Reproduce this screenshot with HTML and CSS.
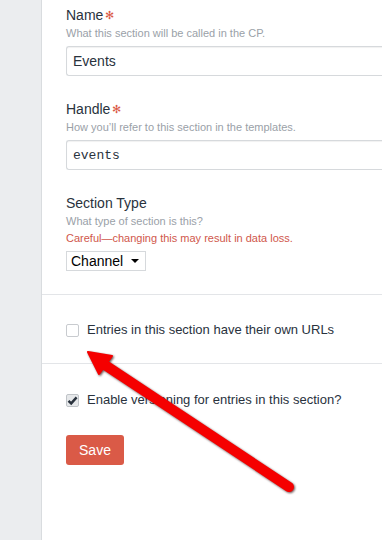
FILE: index.html
```html
<!DOCTYPE html>
<html>
<head>
  <title>Edit Section</title>
  <link rel="stylesheet" href="styles.css">
</head>
<body>
  <div class="page">
    <div class="sidebar"></div>

    <div class="main">
      <div class="block">
        <div class="field">
          <div class="label">Name<span class="req">&#x273B;</span></div>
          <div class="instr">What this section will be called in the CP.</div>
          <input class="text" type="text" value="Events">
        </div>

        <div class="field">
          <div class="label">Handle<span class="req">&#x273B;</span></div>
          <div class="instr">How you’ll refer to this section in the templates.</div>
          <input class="text code" type="text" value="events">
        </div>

        <div class="field">
          <div class="label">Section Type</div>
          <div class="instr">What type of section is this?</div>
          <div class="instr warning">Careful—changing this may result in data loss.</div>
          <div class="select">
            <select>
              <option>Channel</option>
              <option>Single</option>
              <option>Structure</option>
            </select>
            <span class="caret"></span>
          </div>
        </div>
      </div>

      <div class="block check-block">
        <label class="check">
          <span class="box"></span>
          Entries in this section have their own URLs
        </label>
      </div>

      <div class="block check-block last">
        <label class="check">
          <span class="box checked">
            <svg width="11" height="11" viewBox="0 0 11 11"><path d="M1.5 5.8 L4.2 8.4 L9.6 2.4" fill="none" stroke="#29323d" stroke-width="2.4"/></svg>
          </span>
          Enable versioning for entries in this section?
        </label>
        <button class="btn">Save</button>
      </div>
    </div>
  </div>

  <!-- annotation arrow drawn over the screenshot -->
  <svg class="arrow" width="382" height="540" viewBox="0 0 382 540">
    <line x1="102" y1="363" x2="289" y2="487" stroke="#f50000" stroke-width="10" stroke-linecap="round"/>
    <polygon points="88,352 112,356 99,374" fill="#f50000" stroke="#f50000" stroke-width="2" stroke-linejoin="round"/>
  </svg>
</body>
</html>
```

FILE: styles.css
```css
body {
  margin: 0;
  padding: 0;
  background-color: #fff;
  font-family: "Liberation Sans", Arial, sans-serif;
  color: #29323d;
}

.page {
  display: flex;
  min-height: 540px;
  overflow: hidden;
}

.sidebar {
  width: 41px;
  flex-shrink: 0;
  background-color: #ebedef;
  border-right: 1px solid #d9dcdf;
}

.main {
  flex: 1;
  min-width: 0;
}

.block {
  padding: 5px 0 0 24px;
}

.field {
  margin-bottom: 23px;
}

.label {
  font-size: 14px;
  line-height: 20px;
  color: #29323d;
}

.req {
  color: #da5a47;
  font-size: 11px;
  margin-left: 2px;
  vertical-align: 1px;
}

.instr {
  font-size: 11px;
  line-height: 17px;
  color: #9aa1a8;
}

.warning {
  color: #d0574b;
}

.text {
  display: block;
  box-sizing: border-box;
  width: 340px;
  height: 30px;
  margin-top: 4px;
  padding: 0 6px;
  border: 1px solid #d6d9dc;
  border-right: none;
  border-radius: 3px 0 0 3px;
  box-shadow: inset 0 1px 1px rgba(0, 0, 0, 0.06);
  font-family: "Liberation Sans", Arial, sans-serif;
  font-size: 14px;
  color: #29323d;
  outline: none;
}

.code {
  font-family: "Liberation Mono", "Courier New", monospace;
  font-size: 13px;
}

.select {
  position: relative;
  display: inline-block;
  margin-top: 4px;
}

.select select {
  -webkit-appearance: none;
  appearance: none;
  display: block;
  box-sizing: border-box;
  width: 80px;
  height: 20px;
  padding: 0 0 0 4px;
  border: 1px solid #d6d9dc;
  border-radius: 0;
  background-color: #fff;
  font-family: "Liberation Sans", Arial, sans-serif;
  font-size: 14px;
  color: #000;
}

.caret {
  position: absolute;
  right: 7px;
  top: 8px;
  border-left: 4px solid transparent;
  border-right: 4px solid transparent;
  border-top: 4px solid #000;
}

.check-block {
  border-top: 1px solid #e3e5e8;
  padding-top: 25px;
  padding-bottom: 23px;
}

.check-block.last {
  padding-top: 26px;
}

.check {
  display: flex;
  align-items: center;
  font-size: 13px;
  line-height: 20px;
  color: #29323d;
}

.box {
  width: 11px;
  height: 11px;
  margin: 1px 8px 0 0;
  border: 1px solid #c8cbcf;
  border-radius: 2px;
  background-color: #fff;
  display: flex;
  align-items: center;
  justify-content: center;
}

.box.checked {
  background-color: #e6e8ea;
  border-color: #c0c4c8;
}

.btn {
  margin-top: 25px;
  width: 58px;
  height: 30px;
  border: none;
  border-radius: 3px;
  background-color: #da5a47;
  color: #fff;
  font-family: "Liberation Sans", Arial, sans-serif;
  font-size: 14px;
  cursor: pointer;
}

.arrow {
  position: absolute;
  left: 0;
  top: 0;
  pointer-events: none;
  filter: drop-shadow(1px 1.5px 1px rgba(40, 0, 0, 0.7));
}
```
